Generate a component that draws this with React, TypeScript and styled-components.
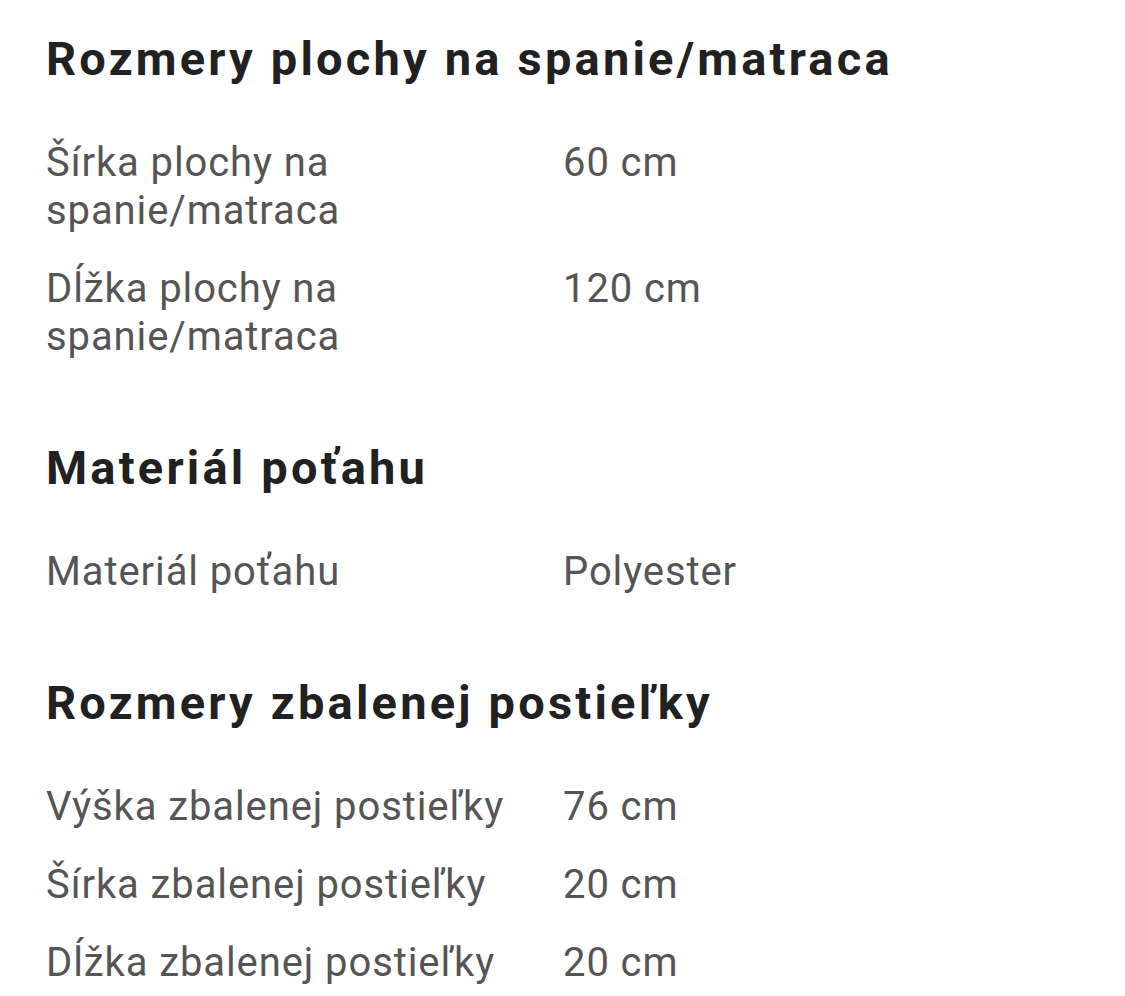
import React from 'react'
import styled, { createGlobalStyle } from 'styled-components'

const GlobalStyle = createGlobalStyle`
  html, body {
    margin: 0;
    padding: 0;
    background: #ffffff;
  }
  body {
    font-family: Roboto, "Noto Sans", Arial, sans-serif;
    -webkit-font-smoothing: antialiased;
  }
`

type Row = { label: string; value: string }
type Section = { title: string; rows: Row[] }

const sections: Section[] = [
  {
    title: 'Rozmery plochy na spanie/matraca',
    rows: [
      { label: 'Šírka plochy na spanie/matraca', value: '60 cm' },
      { label: 'Dĺžka plochy na spanie/matraca', value: '120 cm' },
    ],
  },
  {
    title: 'Materiál poťahu',
    rows: [{ label: 'Materiál poťahu', value: 'Polyester' }],
  },
  {
    title: 'Rozmery zbalenej postieľky',
    rows: [
      { label: 'Výška zbalenej postieľky', value: '76 cm' },
      { label: 'Šírka zbalenej postieľky', value: '20 cm' },
      { label: 'Dĺžka zbalenej postieľky', value: '20 cm' },
    ],
  },
]

export default function App() {
  return (
    <>
      <GlobalStyle />
      <Page>
        {sections.map(section => (
          <SectionBlock key={section.title}>
            <Title>{section.title}</Title>
            <SpecList>
              {section.rows.map(row => (
                <SpecRow key={row.label}>
                  <Label>{row.label}</Label>
                  <Value>{row.value}</Value>
                </SpecRow>
              ))}
            </SpecList>
          </SectionBlock>
        ))}
      </Page>
    </>
  )
}

const Page = styled.div`
  padding: 33px 46px 0;
  display: flex;
  flex-direction: column;
  gap: 81px;
`

const SectionBlock = styled.section`
  display: flex;
  flex-direction: column;
`

const Title = styled.h2`
  margin: 0 0 54px;
  font-family: Roboto, sans-serif;
  font-weight: 700;
  font-size: 47px;
  line-height: 52px;
  letter-spacing: 3.2px;
  color: #212121;
`

const SpecList = styled.div`
  display: flex;
  flex-direction: column;
  gap: 30px;
`

const SpecRow = styled.div`
  display: grid;
  grid-template-columns: 517px 1fr;
`

const Label = styled.div`
  padding-right: 40px;
  font-size: 40px;
  line-height: 48px;
  letter-spacing: 0.9px;
  color: #555555;
`

const Value = styled.div`
  font-size: 40px;
  line-height: 48px;
  letter-spacing: 0.9px;
  color: #555555;
`
